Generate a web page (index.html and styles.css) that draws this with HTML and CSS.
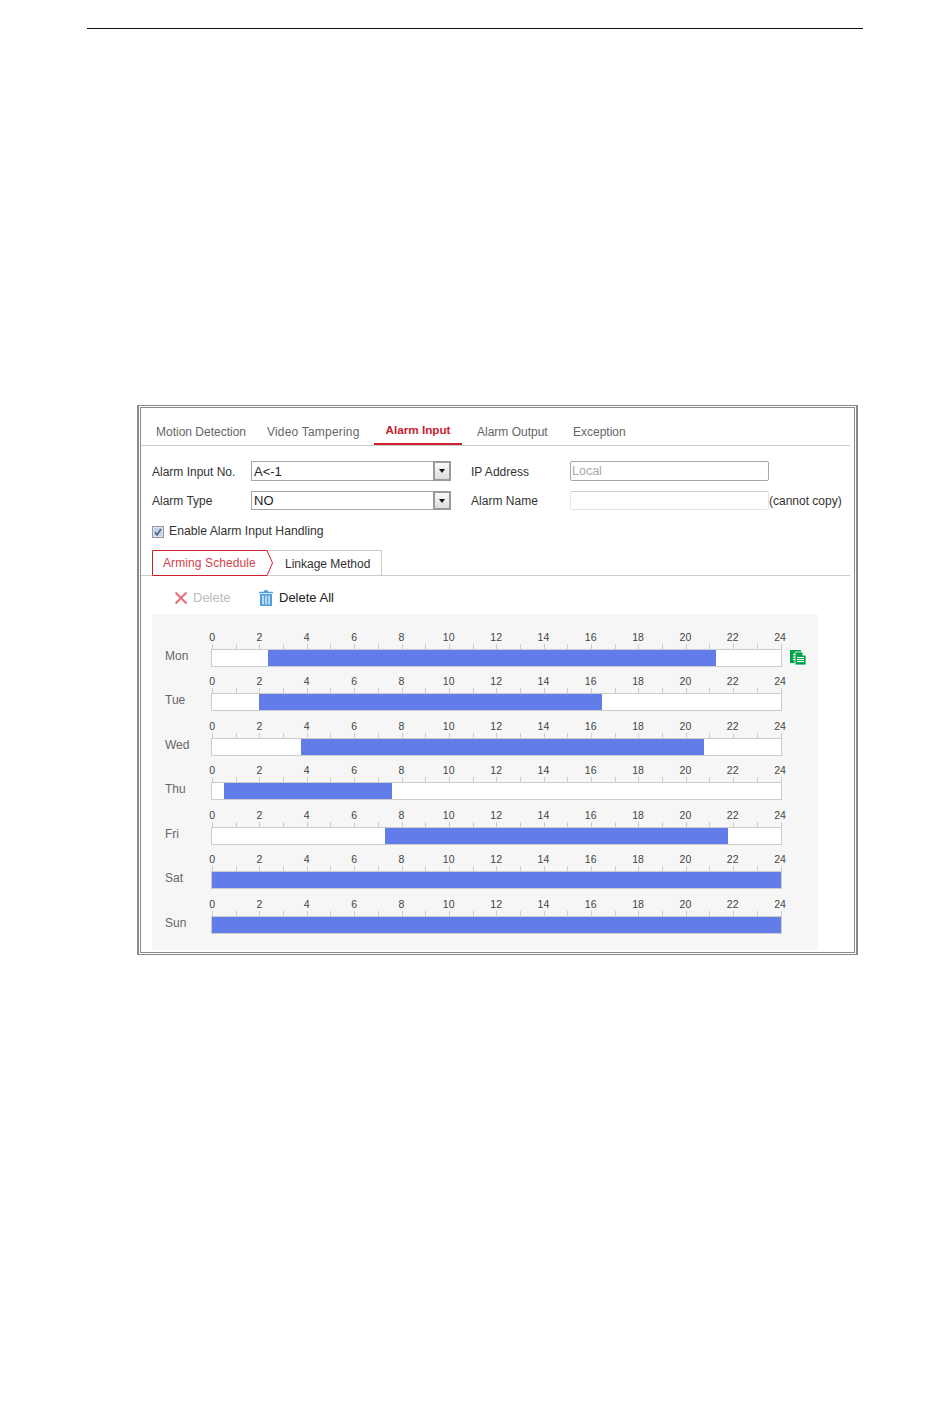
FILE: index.html
```html
<!DOCTYPE html>
<html lang="en">
<head>
<meta charset="utf-8">
<title>Alarm Input</title>
<link rel="stylesheet" href="styles.css">
</head>
<body>
<div class="page-rule"></div>
<div class="frame">
  <div class="frame-inner">
    <div class="tabs">
      <span class="tab tab-motion">Motion Detection</span>
      <span class="tab tab-video">Video Tampering</span>
      <span class="tab tab-active">Alarm Input</span>
      <span class="tab tab-output">Alarm Output</span>
      <span class="tab tab-exception">Exception</span>
    </div>
    <div class="form">
      <div class="form-row">
        <span class="lbl lbl-low">Alarm Input No.</span>
        <div class="select"><span class="select-val select-low">A&lt;-1</span><span class="select-btn"><i class="arrow"></i></span></div>
        <span class="lbl lbl2 lbl-low">IP Address</span>
        <div class="input input-dis">Local</div>
      </div>
      <div class="form-row form-row2">
        <span class="lbl">Alarm Type</span>
        <div class="select"><span class="select-val">NO</span><span class="select-btn"><i class="arrow"></i></span></div>
        <span class="lbl lbl2">Alarm Name</span>
        <div class="input input-light"></div>
        <span class="note">(cannot copy)</span>
      </div>
      <div class="check-row">
        <svg class="check" width="12" height="12" viewBox="0 0 12 12"><rect x="0.5" y="0.5" width="11" height="11" fill="#dfe4ee" stroke="#8e98ac"/><rect x="2" y="2" width="8" height="8" fill="#c9d2e2"/><path d="M3 6l2 3 4-6" fill="none" stroke="#4a5f86" stroke-width="1.5"/></svg>
        <span class="check-text">Enable Alarm Input Handling</span>
      </div>
    </div>
    <div class="subtabs">
      <div class="sub sub-active">
        Arming Schedule
        <svg class="sub-shape" width="122" height="26" viewBox="0 0 122 26"><path d="M0.5 0.5H115L120.5 13L115 25.5H0.5Z" fill="none" stroke="#d0202e"/></svg>
      </div>
      <div class="sub sub-link">Linkage Method</div>
    </div>
    <div class="toolbar">
      <span class="tool tool-del">
        <svg width="14" height="14" viewBox="0 0 14 14"><path d="M1.5 1.5l11 11M12.5 1.5l-11 11" stroke="#ee6b75" stroke-width="2" fill="none"/></svg>
        Delete
      </span>
      <span class="tool tool-all">
        <svg width="14" height="16" viewBox="0 0 14 16"><path d="M0 2.5h14M5 1h4" stroke="#4f9fdc" stroke-width="1.6" fill="none"/><path d="M1 4h12v12H1z" fill="#4f9fdc"/><path d="M4 5.5v9M7 5.5v9M10 5.5v9" stroke="#fff" stroke-width="1.2"/></svg>
        Delete All
      </span>
    </div>
    <div class="panel" id="panel"></div>
  </div>
</div>
<script src="app.js"></script>
</body>
</html>
```

FILE: styles.css
```css
html, body { margin: 0; padding: 0; background: #fff; }
body { height: 1408px; overflow: hidden; font: 12px/14px "Liberation Sans", Arial, sans-serif; color: #333; }

.page-rule { height: 1px; margin: 27.5px 87px 0; background: #111; }

.frame { box-sizing: border-box; width: 721px; height: 550px; margin: 376.5px 0 0 137px; border: 1px solid #8a8a8a; border-left-width: 2px; border-right-width: 2px; padding: 1px; }
.frame-inner { box-sizing: border-box; height: 100%; border: 1px solid #8a8a8a; padding-right: 4px; }

.tabs { display: flex; height: 37px; border-bottom: 1px solid #ccc; box-sizing: content-box; }
.tab { color: #666; padding-top: 17px; }
.tab-motion { margin-left: 15px; width: 111px; }
.tab-video { width: 107px; letter-spacing: 0.2px; }
.tab-active { box-sizing: border-box; width: 88px; height: 37px; padding-top: 15px; text-align: center; color: #c8222f; font-weight: bold; font-size: 11.7px; border-bottom: 2px solid #d0202e; }
.tab-output { margin-left: 15px; width: 96px; }

.form { padding: 15px 0 0 11px; }
.form-row { display: flex; align-items: center; height: 20px; }
.form-row2 { margin-top: 10px; height: 19px; }
.lbl { width: 99px; color: #333; }
.lbl2 { margin-left: 20px; letter-spacing: 0.02px; }
.lbl-low { padding-top: 2px; }
.select { box-sizing: border-box; display: flex; justify-content: space-between; width: 200px; height: 100%; border: 1px solid #a6a6a6; background: #fff; }
.select-val { padding-left: 2px; font-size: 13px; line-height: 18px; color: #222; }
.select-low { line-height: 19px; }
.select-btn { box-sizing: border-box; display: flex; align-items: center; justify-content: center; width: 18px; margin: -1px -1px -1px 0; border: 2px solid #9a9a9a; background: linear-gradient(#fafafa, #dcdcdc); }
.arrow { width: 0; height: 0; border: 3.5px solid transparent; border-top: 4px solid #111; border-bottom: 0; }
.input { box-sizing: border-box; width: 199px; height: 100%; border-radius: 2px; padding-left: 1px; line-height: 19px; font-size: 12.5px; }
.input-dis { border: 1px solid #a6a6a6; color: #aaa; }
.input-light { border: 1px solid #e2e4ea; border-top-color: #ccc; }
.note { color: #333; font-size: 12px; }
.check-row { display: flex; align-items: center; gap: 5px; margin-top: 13px; height: 16px; }
.check { margin-top: 2px; }
.check-text { color: #333; font-size: 12.2px; margin-top: -1px; }

.subtabs { display: flex; margin-top: 11px; height: 25px; border-bottom: 1px solid #ccc; padding-left: 11px; }
.sub { box-sizing: border-box; height: 26px; line-height: 27px; }
.sub-active { position: relative; width: 115px; padding-left: 11px; color: #d0414d; letter-spacing: 0.1px; }
.sub-shape { position: absolute; left: 0; top: 0; }
.sub-link { width: 115px; padding-left: 18px; color: #333; border: 1px solid #ccc; border-left: 0; line-height: 26px; }

.toolbar { box-sizing: border-box; display: flex; align-items: center; height: 38px; padding: 6px 0 0 33px; font-size: 13px; }
.tool { display: flex; align-items: center; gap: 5px; }
.tool-del { color: #bbb; width: 85px; }
.tool-all { color: #222; gap: 6px; }

.panel { box-sizing: border-box; width: 666px; height: 336px; margin-left: 11px; background: #f6f6f6; padding: 16px 0 0 13px; }
.day { display: flex; height: 44.45px; position: relative; }
.day-name { width: 46px; padding-top: 19px; color: #666; }
.scale { width: 572px; }
.nums { display: flex; height: 14px; margin-left: -22.5px; font-size: 10.5px; line-height: 14px; color: #444; letter-spacing: 0.1px; }
.nums span { flex: 0 0 47.33px; text-align: center; }
.ticks { display: flex; height: 5px; margin-left: 1px; }
.ticks i { flex: 0 0 23.7px; box-sizing: border-box; border-left: 1px solid #ccc; }
.track { box-sizing: border-box; display: flex; width: 571px; height: 18px; border: 1px solid #ccc; background: #fff; }
.seg { height: 100%; background: #627de9; }
.copy { position: absolute; left: 625px; top: 20px; }
```

FILE: app.js
```js
var days = [
  ["Mon", 268, 716], ["Tue", 259, 602], ["Wed", 301, 704], ["Thu", 224, 392],
  ["Fri", 385, 728], ["Sat", 212, 781], ["Sun", 212, 781]
];
var hours = [0, 2, 4, 6, 8, 10, 12, 14, 16, 18, 20, 22, 24];
var copyIcon = '<svg class="copy" width="17" height="15" viewBox="0 0 17 15"><path d="M0 0h11v13H0z" fill="#00a24f"/><path d="M5 2h7.500l3.500 3.500V15H5z" fill="#00a24f" stroke="#f6f6f6" stroke-width="0.8"/><path d="M12.500 2v3.500H16z" fill="#fff"/><path d="M7 7.500h7M7 9.500h7M7 11.500h7M3 4.500h2M3 7h2M3 9.500h2" stroke="#fff" stroke-width="1"/></svg>';
var ticks = "";
for (var t = 0; t < 25; t++) { ticks += "<i></i>"; }
var html = days.map(function (d, i) {
  var nums = hours.map(function (h) { return "<span>" + h + "</span>"; }).join("");
  var seg = '<div class="seg" style="margin-left:' + (d[1] - 212) + "px;width:" + (d[2] - d[1]) + 'px"></div>';
  return '<div class="day"><div class="day-name">' + d[0] + '</div><div class="scale"><div class="nums">' + nums +
    '</div><div class="ticks">' + ticks + '</div><div class="track">' + seg + "</div></div>" + (i === 0 ? copyIcon : "") + "</div>";
}).join("");
document.getElementById("panel").innerHTML = html;
```
